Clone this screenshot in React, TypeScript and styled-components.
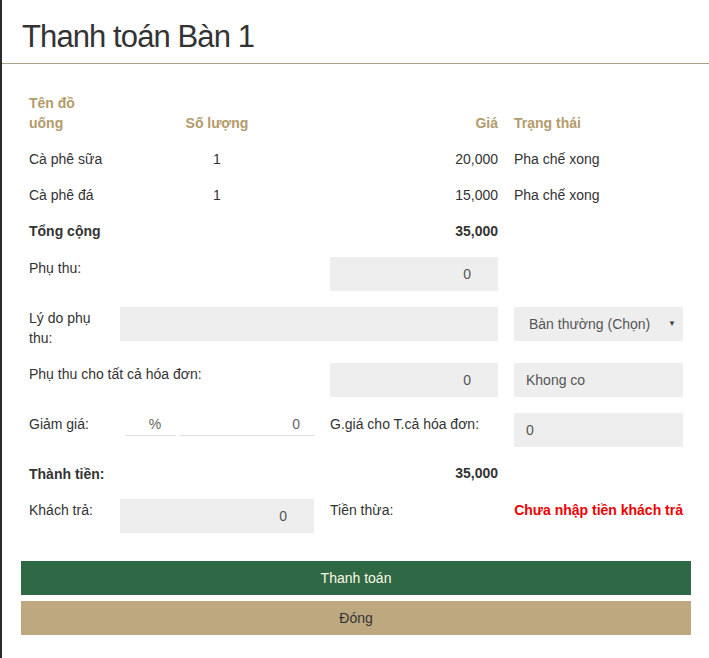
import React from "react";
import styled, { createGlobalStyle } from "styled-components";

const GlobalStyle = createGlobalStyle`
  html, body {
    margin: 0;
    padding: 0;
    background: #ffffff;
  }
  body {
    font-family: "Liberation Sans", Arial, Helvetica, sans-serif;
    font-size: 14px;
    line-height: 20px;
    color: #333333;
  }
  * { box-sizing: border-box; }
`;

const COLS = "91px 210px 184px 1fr";

const Modal = styled.div`
  width: 709px;
  min-height: 658px;
  border-left: 2px solid #2b2b2b;
  background: #ffffff;
`;

const Header = styled.div`
  padding: 19px 19px 8px 20px;
  border-bottom: 1px solid #a89f88;
`;

const Title = styled.h4`
  margin: 0;
  font-size: 31px;
  line-height: 36px;
  font-weight: normal;
  letter-spacing: -0.9px;
  color: #333333;
`;

const Body = styled.div`
  padding: 21px 18px 0 19px;
`;

const Table = styled.table`
  width: 100%;
  table-layout: fixed;
  border-collapse: collapse;
  margin-bottom: 8px;
`;

const Th = styled.th<{ $align?: string }>`
  padding: 8px;
  text-align: ${(p) => p.$align || "left"};
  vertical-align: bottom;
  color: #b39b6c;
  font-weight: bold;
`;

const Td = styled.td<{ $align?: string; $bold?: boolean }>`
  padding: 8px;
  text-align: ${(p) => p.$align || "left"};
  vertical-align: top;
  font-weight: ${(p) => (p.$bold ? "bold" : "normal")};
`;

const Form = styled.div`
  display: flex;
  flex-direction: column;
  gap: 16px;
`;

const FormRow = styled.div`
  display: grid;
  grid-template-columns: ${COLS};
  align-items: start;
`;

const Cell = styled.div<{ $span?: number; $start?: number; $align?: string }>`
  padding: 0 8px;
  grid-column: ${(p) => `${p.$start || "auto"} / span ${p.$span || 1}`};
  text-align: ${(p) => p.$align || "left"};
`;

const Label = styled.div<{ $bold?: boolean }>`
  padding-top: 1px;
  margin-bottom: -1px;
  font-weight: ${(p) => (p.$bold ? "bold" : "normal")};
  white-space: ${(p) => (p.$bold ? "nowrap" : "normal")};
`;

const Amount = styled.div`
  font-weight: bold;
  text-align: right;
`;

const Warning = styled.div`
  padding-top: 1px;
  margin-bottom: -1px;
  font-weight: bold;
  color: #ee0000;
  text-align: right;
`;

const FilledInput = styled.input<{ $align?: string }>`
  display: block;
  width: 100%;
  height: 34px;
  border: 0;
  outline: none;
  background: #eeeeee;
  font-family: inherit;
  font-size: 14px;
  color: #555555;
  text-align: ${(p) => p.$align || "left"};
  padding: ${(p) => (p.$align === "right" ? "0 27px 0 12px" : "0 12px")};
`;

const SelectWrap = styled.div`
  position: relative;
`;

const Select = styled.select`
  display: block;
  width: 100%;
  height: 34px;
  border: 0;
  outline: none;
  background: #eeeeee;
  font-family: inherit;
  font-size: 14px;
  color: #555555;
  padding: 0 24px 0 15px;
  appearance: none;
  -webkit-appearance: none;
`;

const Caret = styled.span`
  position: absolute;
  right: 7px;
  top: 9px;
  font-size: 8px;
  line-height: 16px;
  color: #444444;
  pointer-events: none;
`;

const DiscountGroup = styled.div`
  display: flex;
  gap: 4px;
  padding-left: 6px;
`;

const LineInput = styled.input<{ $w?: string; $align?: string; $pl?: string; $pr?: string }>`
  display: block;
  width: ${(p) => p.$w || "auto"};
  flex: ${(p) => (p.$w ? "none" : "1")};
  min-width: 0;
  height: 23px;
  padding: 0 ${(p) => p.$pr || "0"} 1px ${(p) => p.$pl || "0"};
  border: 0;
  border-bottom: 1px solid #dddddd;
  outline: none;
  background: transparent;
  font-family: inherit;
  font-size: 14px;
  color: #666666;
  text-align: ${(p) => p.$align || "left"};
`;

const Buttons = styled.div`
  display: flex;
  flex-direction: column;
  gap: 6px;
  margin-top: 28px;
`;

const Button = styled.button<{ $variant: "primary" | "secondary" }>`
  display: block;
  width: 100%;
  height: 34px;
  border: 0;
  font-family: inherit;
  font-size: 14px;
  cursor: pointer;
  background: ${(p) => (p.$variant === "primary" ? "#2f6844" : "#bea880")};
  color: ${(p) => (p.$variant === "primary" ? "#fdf9e6" : "#333333")};
`;

const items = [
  { name: "Cà phê sữa", qty: 1, price: "20,000", status: "Pha chế xong" },
  { name: "Cà phê đá", qty: 1, price: "15,000", status: "Pha chế xong" },
];

export default function App() {
  return (
    <>
      <GlobalStyle />
      <Modal>
        <Header>
          <Title>Thanh toán Bàn 1</Title>
        </Header>
        <Body>
          <Table>
            <colgroup>
              <col style={{ width: 91 }} />
              <col style={{ width: 210 }} />
              <col style={{ width: 184 }} />
              <col />
            </colgroup>
            <thead>
              <tr>
                <Th>Tên đồ uống</Th>
                <Th $align="center">Số lượng</Th>
                <Th $align="right">Giá</Th>
                <Th>Trạng thái</Th>
              </tr>
            </thead>
            <tbody>
              {items.map((it) => (
                <tr key={it.name}>
                  <Td>{it.name}</Td>
                  <Td $align="center">{it.qty}</Td>
                  <Td $align="right">{it.price}</Td>
                  <Td>{it.status}</Td>
                </tr>
              ))}
              <tr>
                <Td $bold>Tổng cộng</Td>
                <Td />
                <Td $align="right" $bold>
                  35,000
                </Td>
                <Td />
              </tr>
            </tbody>
          </Table>

          <Form>
            <FormRow>
              <Cell>
                <Label>Phụ thu:</Label>
              </Cell>
              <Cell $start={3}>
                <FilledInput $align="right" defaultValue="0" />
              </Cell>
            </FormRow>

            <FormRow>
              <Cell>
                <Label>Lý do phụ thu:</Label>
              </Cell>
              <Cell $span={2}>
                <FilledInput />
              </Cell>
              <Cell>
                <SelectWrap>
                  <Select defaultValue="normal">
                    <option value="normal">Bàn thường (Chọn)</option>
                  </Select>
                  <Caret>▼</Caret>
                </SelectWrap>
              </Cell>
            </FormRow>

            <FormRow>
              <Cell $span={2}>
                <Label>Phụ thu cho tất cả hóa đơn:</Label>
              </Cell>
              <Cell>
                <FilledInput $align="right" defaultValue="0" />
              </Cell>
              <Cell>
                <FilledInput defaultValue="Khong co" />
              </Cell>
            </FormRow>

            <FormRow>
              <Cell>
                <Label>Giảm giá:</Label>
              </Cell>
              <Cell>
                <DiscountGroup>
                  <LineInput $w="50px" $align="center" $pl="8px" defaultValue="%" />
                  <LineInput $align="right" $pr="14px" defaultValue="0" />
                </DiscountGroup>
              </Cell>
              <Cell>
                <Label>G.giá cho T.cả hóa đơn:</Label>
              </Cell>
              <Cell>
                <FilledInput defaultValue="0" />
              </Cell>
            </FormRow>

            <FormRow>
              <Cell $span={2}>
                <Label $bold>Thành tiền:</Label>
              </Cell>
              <Cell>
                <Amount>35,000</Amount>
              </Cell>
            </FormRow>

            <FormRow>
              <Cell>
                <Label>Khách trả:</Label>
              </Cell>
              <Cell>
                <FilledInput $align="right" defaultValue="0" />
              </Cell>
              <Cell>
                <Label>Tiền thừa:</Label>
              </Cell>
              <Cell>
                <Warning>Chưa nhập tiền khách trả</Warning>
              </Cell>
            </FormRow>
          </Form>

          <Buttons>
            <Button $variant="primary">Thanh toán</Button>
            <Button $variant="secondary">Đóng</Button>
          </Buttons>
        </Body>
      </Modal>
    </>
  );
}
